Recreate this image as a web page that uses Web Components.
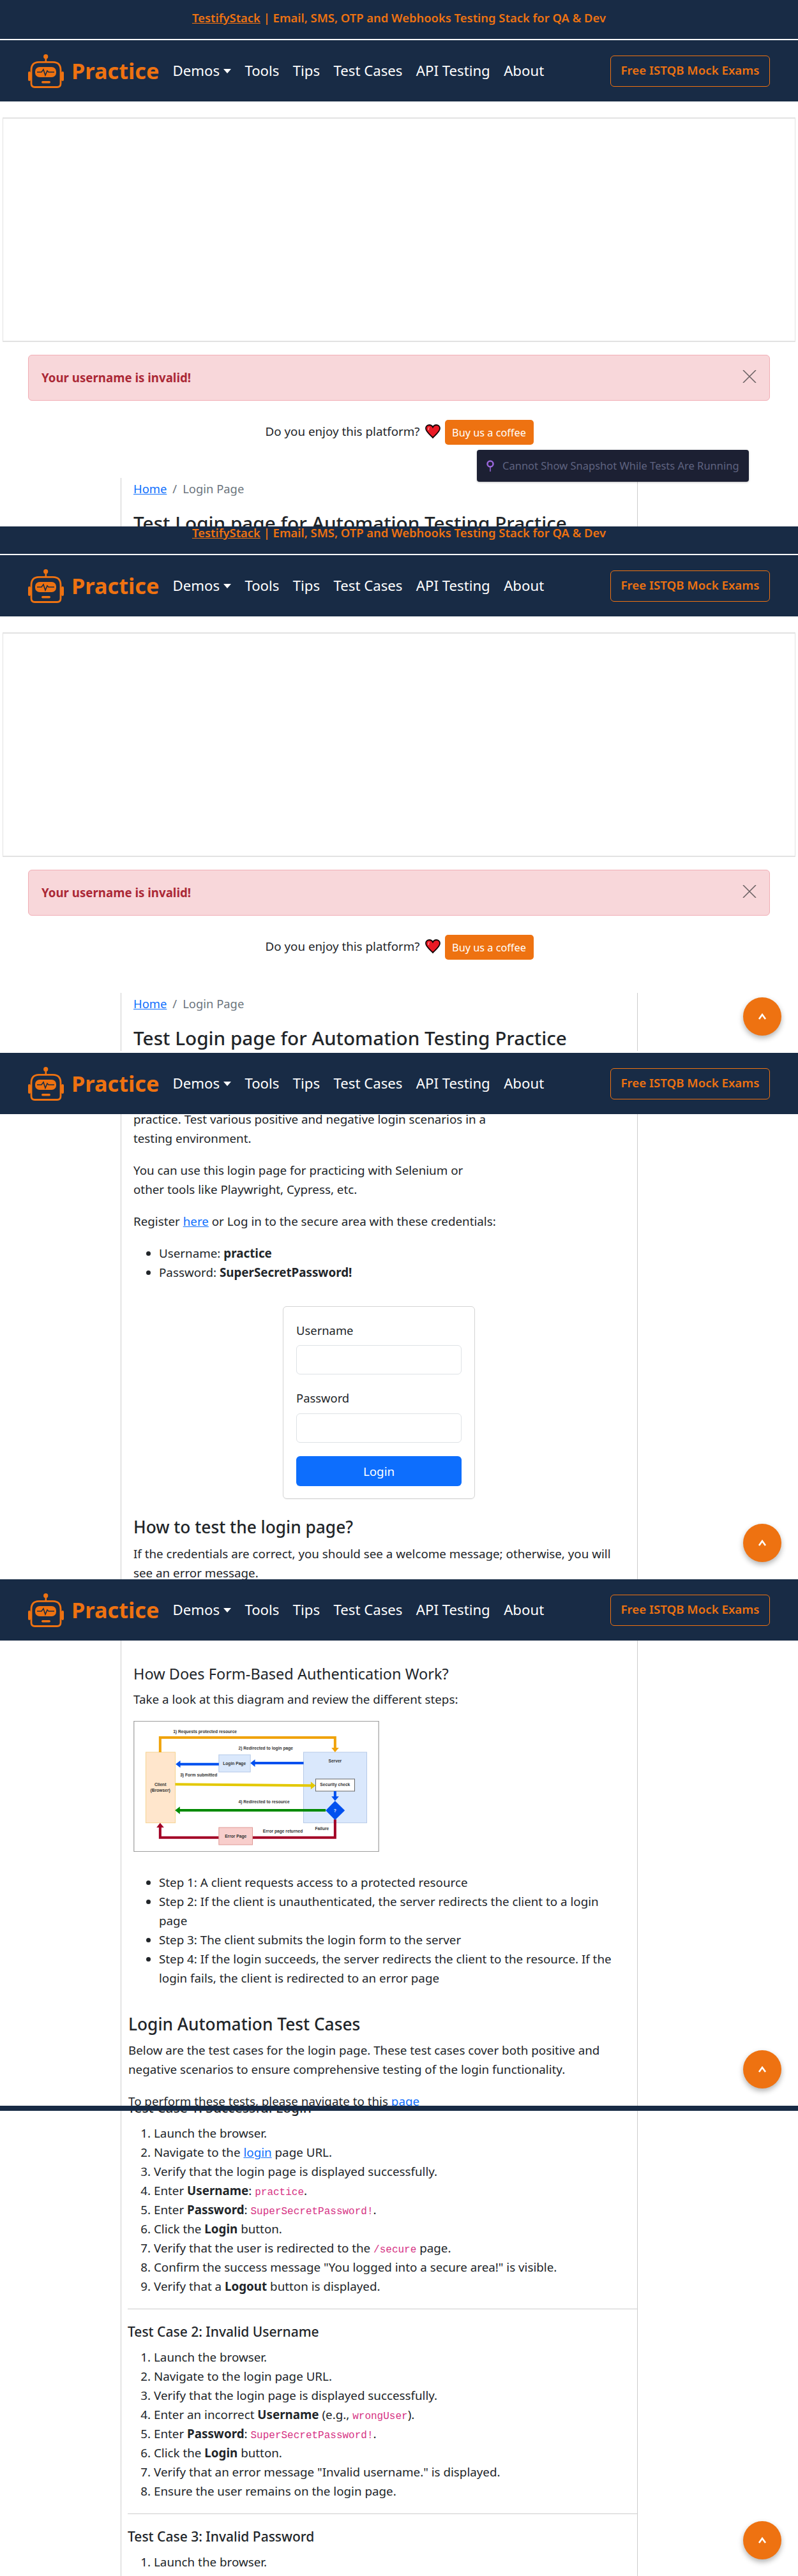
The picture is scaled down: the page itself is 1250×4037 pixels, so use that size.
<!DOCTYPE html>
<html>
<head>
<meta charset="utf-8">
<title>Test Login page for Automation Testing Practice</title>
<style>
  body { margin: 0; background: #fff; color: #212529; font: 18.8px/30px "Noto Sans", sans-serif; }
</style>
</head>
<body>

<page-slice style="--h:825px">
  <promo-banner></promo-banner>
  <practice-nav></practice-nav>
  <ad-frame></ad-frame>
  <alert-box>Your username is invalid!</alert-box>
  <coffee-row></coffee-row>
  <content-col><login-heading></login-heading></content-col>
  <snapshot-tip>Cannot Show Snapshot While Tests Are Running</snapshot-tip>
</page-slice>

<page-slice style="--h:825px">
  <promo-banner compact></promo-banner>
  <practice-nav></practice-nav>
  <ad-frame></ad-frame>
  <alert-box>Your username is invalid!</alert-box>
  <coffee-row></coffee-row>
  <content-col><login-heading></login-heading></content-col>
  <scroll-top style="top:738px"></scroll-top>
</page-slice>

<page-slice style="--h:825px">
  <practice-nav></practice-nav>
  <content-col style="margin-top:-7px">
    <login-intro></login-intro>
    <login-card></login-card>
    <how-to-test></how-to-test>
  </content-col>
  <scroll-top style="top:738px"></scroll-top>
</page-slice>

<page-slice style="--h:825px">
  <practice-nav></practice-nav>
  <content-col>
    <auth-steps></auth-steps>
    <cases-intro></cases-intro>
  </content-col>
  <scroll-top style="top:738px"></scroll-top>
</page-slice>

<page-slice style="--h:737px">
  <nav-strip></nav-strip>
  <content-col>
    <test-case first name="Test Case 1: Successful Login" steps='["Launch the browser.","Navigate to the <a href=\"#\">login</a> page URL.","Verify that the login page is displayed successfully.","Enter <b>Username</b>: <code>practice</code>.","Enter <b>Password</b>: <code>SuperSecretPassword!</code>.","Click the <b>Login</b> button.","Verify that the user is redirected to the <code>/secure</code> page.","Confirm the success message \"You logged into a secure area!\" is visible.","Verify that a <b>Logout</b> button is displayed."]'></test-case>
    <test-case name="Test Case 2: Invalid Username" steps='["Launch the browser.","Navigate to the login page URL.","Verify that the login page is displayed successfully.","Enter an incorrect <b>Username</b> (e.g., <code>wrongUser</code>).","Enter <b>Password</b>: <code>SuperSecretPassword!</code>.","Click the <b>Login</b> button.","Verify that an error message \"Invalid username.\" is displayed.","Ensure the user remains on the login page."]'></test-case>
    <test-case name="Test Case 3: Invalid Password" steps='["Launch the browser."]'></test-case>
  </content-col>
  <scroll-top style="top:651px"></scroll-top>
</page-slice>

<script>
const NAVY = '#182b45';
const ORANGE = '#ee7211';

const textCss = `
  * { box-sizing: border-box; }
  p, ul, ol, h1, h2, h3 { margin: 0; padding: 0; }
  p, li { font-size: 18.8px; line-height: 30px; }
  a { color: #0d6efd; text-decoration: underline; text-underline-offset: 1px; }
  b { font-weight: 700; }
  code { font: 16px/1 "Liberation Mono", monospace; color: #d63384; }
  h1, h2, h3 { font-weight: 500; color: #212529; }
`;

class PageSlice extends HTMLElement {
  constructor() {
    super();
    this.attachShadow({mode: 'open'}).innerHTML = `
      <style>
        :host { display: block; position: relative; height: var(--h); overflow: hidden; }
      </style>
      <slot></slot>`;
  }
}

class PromoBanner extends HTMLElement {
  constructor() {
    super();
    this.attachShadow({mode: 'open'}).innerHTML = `
      <style>
        :host { display: block; height: 63px; background: ${NAVY}; border-bottom: 2px solid #fff; overflow: hidden; box-sizing: border-box; }
        :host([compact]) { height: 45px; }
        .text { height: 61px; padding-top: 13px; text-align: center; color: ${ORANGE}; font-size: 18.4px; font-weight: 600; line-height: 30px; }
        :host([compact]) .text { margin-top: -18px; }
        a { color: inherit; }
      </style>
      <div class="text"><a href="#">TestifyStack</a> | Email, SMS, OTP and Webhooks Testing Stack for QA &amp; Dev</div>`;
  }
}

class PracticeNav extends HTMLElement {
  constructor() {
    super();
    this.attachShadow({mode: 'open'}).innerHTML = `
      <style>
        :host { display: flex; position: relative; z-index: 2; align-items: center; height: 96px; padding: 0 44px; background: ${NAVY}; box-sizing: border-box; }
        svg { width: 56px; height: 54px; flex: none; margin-right: 12px; margin-top: 2px; }
        .brand { color: ${ORANGE}; font-size: 34.3px; font-weight: 700; line-height: 40px; margin-right: 21px; }
        .links { display: flex; gap: 21.4px; align-items: center; flex: 1; color: #fff; font-size: 22.2px; line-height: 30px; }
        .demos { display: flex; align-items: center; gap: 6px; }
        .demos::after { content: ""; border: 6.5px solid transparent; border-top: 7px solid #fff; border-bottom: 0; }
        .exam { width: 248px; height: 47px; border: 1px solid ${ORANGE}; border-radius: 6px; color: ${ORANGE}; font-size: 18.7px; font-weight: 600; line-height: 44px; text-align: center; }
      </style>
      <svg viewBox="0 0 56 54" fill="${ORANGE}">
        <circle cx="27.7" cy="3.7" r="3.6"/>
        <rect x="26.5" y="5" width="2.6" height="7"/>
        <path d="M17 12.4H39Q51 12.4 51 25V46Q51 51.5 45.5 51.5H10.5Q5 51.5 5 46V25Q5 12.4 17 12.4Z" fill="none" stroke="${ORANGE}" stroke-width="2.8"/>
        <rect x="0" y="27" width="4" height="15" rx="2"/>
        <rect x="52" y="27" width="4" height="15" rx="2"/>
        <rect x="11" y="20" width="33" height="16" rx="7"/>
        <polyline points="14,28 21,28 24,24 27,33 30,26 32,28 41,28" fill="none" stroke="${NAVY}" stroke-width="1.6"/>
        <rect x="21" y="42" width="14" height="3.5" rx="1.7"/>
      </svg>
      <div class="brand">Practice</div>
      <div class="links">
        <span class="demos">Demos</span>
        <span>Tools</span>
        <span>Tips</span>
        <span>Test Cases</span>
        <span>API Testing</span>
        <span>About</span>
      </div>
      <div class="exam">Free ISTQB Mock Exams</div>`;
  }
}

class NavStrip extends HTMLElement {
  constructor() {
    super();
    this.attachShadow({mode: 'open'}).innerHTML = `
      <style>:host { display: block; position: relative; z-index: 2; height: 8px; background: ${NAVY}; }</style>`;
  }
}

class AdFrame extends HTMLElement {
  constructor() {
    super();
    this.attachShadow({mode: 'open'}).innerHTML = `
      <style>
        :host { display: block; height: 352px; margin: 25px 4px 0; border: 1px solid #e2e2e2; border-width: 2px 1px; box-sizing: border-box; }
      </style>`;
  }
}

class AlertBox extends HTMLElement {
  constructor() {
    super();
    this.attachShadow({mode: 'open'}).innerHTML = `
      <style>
        :host { display: flex; align-items: center; justify-content: space-between; height: 72px; margin: 20px 44px 0; padding: 0 20px; background: #f8d7da; border: 1px solid #f1aeb5; border-radius: 6px; color: #ab2836; font-size: 18.7px; font-weight: 700; box-sizing: border-box; }
        svg { width: 22px; height: 20px; margin-top: -5px; }
      </style>
      <span><slot></slot></span>
      <svg viewBox="0 0 22 20" fill="none" stroke="#6e6466" stroke-width="1.6"><path d="M1 0 21 20M21 0 1 20"/></svg>`;
  }
}

class CoffeeRow extends HTMLElement {
  constructor() {
    super();
    this.attachShadow({mode: 'open'}).innerHTML = `
      <style>
        :host { display: flex; align-items: center; justify-content: center; gap: 8px; height: 39px; margin: 30px 0 52px; padding-left: 1px; }
        span { margin-top: -3px; }
        svg { width: 24px; height: 22px; margin-top: -3px; }
        .buy { height: 39px; width: 139px; margin: 0 0 0 -1px; background: ${ORANGE}; border-radius: 5px; color: #fff; font-size: 16.3px; line-height: 40px; text-align: center; }
      </style>
      <span>Do you enjoy this platform?</span>
      <svg viewBox="0 0 24 22">
        <path d="M12 21C7 16 1 11 1 6.5 1 3 3.5 1 6.5 1 9 1 11 2.5 12 4.5 13 2.5 15 1 17.5 1 20.5 1 23 3 23 6.5 23 11 17 16 12 21Z" fill="#ea1a25" stroke="#120405" stroke-width="1.8"/>
        <path d="M6.5 4.5Q4.5 6 5.5 9" fill="none" stroke="#ff9ca0" stroke-width="1.2"/>
      </svg>
      <div class="buy">Buy us a coffee</div>`;
  }
}

class SnapshotTip extends HTMLElement {
  constructor() {
    super();
    this.attachShadow({mode: 'open'}).innerHTML = `
      <style>
        :host { display: flex; align-items: center; position: absolute; z-index: 3; top: 705px; left: 747px; width: 426px; height: 50px; padding-left: 14px; background: #1c2033; border-radius: 4px; color: #5f6380; font-size: 16.5px; box-shadow: 0 1px 3px rgba(0,0,0,.25); box-sizing: border-box; }
        svg { width: 14px; height: 18px; margin-right: 12px; flex: none; }
      </style>
      <svg viewBox="0 0 14 18" fill="none" stroke="#9a67dc" stroke-width="2.5"><circle cx="7" cy="6" r="4.5"/><path d="M7 11V18" stroke-width="1.5"/></svg>
      <span><slot></slot></span>`;
  }
}

class ScrollTop extends HTMLElement {
  constructor() {
    super();
    this.attachShadow({mode: 'open'}).innerHTML = `
      <style>
        :host { display: flex; align-items: center; justify-content: center; position: absolute; z-index: 1; left: 1164px; width: 60px; height: 60px; background: ${ORANGE}; border-radius: 50%; box-shadow: 0 4px 8px rgba(0,0,0,.3); }
        svg { width: 14px; height: 10px; }
      </style>
      <svg viewBox="0 0 14 10" fill="none" stroke="#fff" stroke-width="2.6"><path d="M2 9 7 2 12 9"/></svg>`;
  }
}

class ContentCol extends HTMLElement {
  constructor() {
    super();
    this.attachShadow({mode: 'open'}).innerHTML = `
      <style>
        :host { display: block; width: 810px; margin-left: 189px; padding: 0 23px 0 19px; border: solid #ccc; border-width: 0 1px; box-sizing: border-box; }
      </style>
      <slot></slot>`;
  }
}

class LoginHeading extends HTMLElement {
  constructor() {
    super();
    this.attachShadow({mode: 'open'}).innerHTML = `
      <style>
        ${textCss}
        :host { display: block; padding-top: 2px; }
        .crumb { display: flex; gap: 9px; color: #6c757d; font-size: 18.4px; line-height: 30px; }
        h1 { margin-top: 19px; font-size: 29.7px; line-height: 40px; white-space: nowrap; }
      </style>
      <div class="crumb"><a href="#">Home</a><span>/</span><span>Login Page</span></div>
      <h1>Test Login page for Automation Testing Practice</h1>`;
  }
}

class LoginIntro extends HTMLElement {
  constructor() {
    super();
    this.attachShadow({mode: 'open'}).innerHTML = `
      <style>
        ${textCss}
        :host { display: block; max-width: 600px; }
        p { margin-bottom: 20px; }
        ul { padding-left: 40px; }
      </style>
      <p>practice. Test various positive and negative login scenarios in a<br>testing environment.</p>
      <p>You can use this login page for practicing with Selenium or<br>other tools like Playwright, Cypress, etc.</p>
      <p>Register <a href="#">here</a> or Log in to the secure area with these credentials:</p>
      <ul>
        <li>Username: <b>practice</b></li>
        <li>Password: <b>SuperSecretPassword!</b></li>
      </ul>`;
  }
}

class LoginCard extends HTMLElement {
  constructor() {
    super();
    this.attachShadow({mode: 'open'}).innerHTML = `
      <style>
        * { box-sizing: border-box; }
        :host { display: block; width: 301px; height: 302px; margin: 38px 0 0 234px; padding: 22px 20px 20px; border: 1px solid #d4d4d4; border-radius: 6px; box-shadow: 0 1px 1px rgba(0,0,0,.06); box-sizing: border-box; }
        label { display: block; font-size: 18.4px; line-height: 30px; }
        .field { height: 46px; margin: 8px 0 22px; border: 1px solid #dee2e6; border-radius: 6px; background: #fff; }
        .field.last { margin: 9px 0 21px; }
        button { display: block; width: 100%; height: 47px; border: 0; border-radius: 6px; background: #0d6efd; color: #fff; font: 18.8px "Noto Sans", sans-serif; }
      </style>
      <label>Username</label>
      <div class="field"></div>
      <label>Password</label>
      <div class="field last"></div>
      <button>Login</button>`;
  }
}

class HowToTest extends HTMLElement {
  constructor() {
    super();
    this.attachShadow({mode: 'open'}).innerHTML = `
      <style>
        ${textCss}
        :host { display: block; }
        h2 { margin: 26px 0 9px; font-size: 26.3px; line-height: 36px; }
      </style>
      <h2>How to test the login page?</h2>
      <p>If the credentials are correct, you should see a welcome message; otherwise, you will see an error message.</p>`;
  }
}

class AuthDiagram extends HTMLElement {
  constructor() {
    super();
    this.attachShadow({mode: 'open'}).innerHTML = `
      <style>
        :host { display: block; width: 385px; height: 205px; }
        svg { display: block; width: 100%; height: 100%; }
        text { font: 700 20px "Liberation Sans", sans-serif; fill: #333; }
        .m { text-anchor: middle; }
      </style>
      <svg viewBox="58 52 1152 615">
        <rect x="59" y="53" width="1150" height="613" fill="#fff" stroke="#8a8a8a" stroke-width="3"/>
        <rect x="115" y="199" width="138" height="332" fill="#ffe6cc" stroke="#f5d28f" stroke-width="3"/>
        <rect x="856" y="199" width="297" height="332" fill="#dae8fc" stroke="#b5c9e8" stroke-width="3"/>
        <path d="M182 199V130H1004V182" fill="none" stroke="#f0a30a" stroke-width="12"/>
        <path d="M987 178H1022L1004 199Z" fill="#f0a30a"/>
        <rect x="458" y="211" width="148" height="81" fill="#dae8fc" stroke="#b5c9e8" stroke-width="3"/>
        <path d="M856 250H620" stroke="#0050ef" stroke-width="12"/>
        <path d="M606 250 628 233V268Z" fill="#0050ef"/>
        <path d="M458 255H270" stroke="#0050ef" stroke-width="12"/>
        <path d="M255 255 277 238V272Z" fill="#0050ef"/>
        <path d="M253 350 895 356" stroke="#e3c800" stroke-width="12"/>
        <path d="M913 356 890 338V374Z" fill="#e3c800"/>
        <rect x="913" y="325" width="183" height="57" fill="#fff" stroke="#666" stroke-width="3"/>
        <path d="M1004 382V412" stroke="#0050ef" stroke-width="12"/>
        <path d="M987 407H1022L1004 428Z" fill="#0050ef"/>
        <path d="M960 472H270" stroke="#008a00" stroke-width="12"/>
        <path d="M252 472 275 455V490Z" fill="#008a00"/>
        <path d="M1004 515V600H182V550" fill="none" stroke="#a20025" stroke-width="12"/>
        <path d="M182 531 165 553H200Z" fill="#a20025"/>
        <path d="M1004 428 1050 473 1004 518 960 473Z" fill="#0050ef"/>
        <rect x="458" y="553" width="158" height="81" fill="#f8cecc" stroke="#e09a96" stroke-width="3"/>
        <text x="243" y="108">1) Requests protected resource</text>
        <text x="550" y="188">2) Redirected to login page</text>
        <text class="m" x="531" y="258">Login Page</text>
        <text class="m" x="1004" y="247">Server</text>
        <text x="276" y="314">3) Form submitted</text>
        <text class="m" x="183" y="358">Client</text>
        <text class="m" x="183" y="386">(Browser)</text>
        <text class="m" x="1004" y="359">Security check</text>
        <text x="550" y="438">4) Redirected to resource</text>
        <text class="m" x="1004" y="481" style="fill:#fff">?</text>
        <text x="910" y="566">Failure</text>
        <text x="665" y="576">Error page returned</text>
        <text class="m" x="537" y="600">Error Page</text>
      </svg>`;
  }
}

class AuthSteps extends HTMLElement {
  constructor() {
    super();
    this.attachShadow({mode: 'open'}).innerHTML = `
      <style>
        ${textCss}
        :host { display: block; padding-top: 36px; }
        h3 { font-size: 23.5px; font-weight: 400; line-height: 32px; }
        p { margin: 9px 0 19px; }
        ul { margin-top: 33px; padding-left: 40px; }
      </style>
      <h3>How Does Form-Based Authentication Work?</h3>
      <p>Take a look at this diagram and review the different steps:</p>
      <auth-diagram></auth-diagram>
      <ul>
        <li>Step 1: A client requests access to a protected resource</li>
        <li>Step 2: If the client is unauthenticated, the server redirects the client to a login page</li>
        <li>Step 3: The client submits the login form to the server</li>
        <li>Step 4: If the login succeeds, the server redirects the client to the resource. If the login fails, the client is redirected to an error page</li>
      </ul>`;
  }
}

class CasesIntro extends HTMLElement {
  constructor() {
    super();
    this.attachShadow({mode: 'open'}).innerHTML = `
      <style>
        ${textCss}
        :host { display: block; margin-left: -8px; }
        h2 { margin: 39px 0 8px; font-size: 26.3px; line-height: 36px; }
        p { margin-bottom: 20px; }
      </style>
      <h2>Login Automation Test Cases</h2>
      <p>Below are the test cases for the login page. These test cases cover both positive and negative scenarios to ensure comprehensive testing of the login functionality.</p>
      <p>To perform these tests, please navigate to this <a href="#">page</a></p>`;
  }
}

class TestCase extends HTMLElement {
  constructor() {
    super();
    this.attachShadow({mode: 'open'});
  }
  connectedCallback() {
    const steps = JSON.parse(this.getAttribute('steps'));
    this.shadowRoot.innerHTML = `
      <style>
        ${textCss}
        :host { display: block; margin: 0 -23px 0 -9px; }
        :host([first]) h3 { margin-top: -21px; }
        h3 { margin-bottom: 9px; font-size: 21px; line-height: 32px; }
        ol { padding-left: 41px; }
        hr { height: 1px; margin: 20px 0 19px; border: 0; background: #ccc; }
      </style>
      <h3>${this.getAttribute('name')}</h3>
      <ol>${steps.map(s => `<li>${s}</li>`).join('')}</ol>
      <hr>`;
  }
}

customElements.define('page-slice', PageSlice);
customElements.define('promo-banner', PromoBanner);
customElements.define('practice-nav', PracticeNav);
customElements.define('nav-strip', NavStrip);
customElements.define('ad-frame', AdFrame);
customElements.define('alert-box', AlertBox);
customElements.define('coffee-row', CoffeeRow);
customElements.define('snapshot-tip', SnapshotTip);
customElements.define('scroll-top', ScrollTop);
customElements.define('content-col', ContentCol);
customElements.define('login-heading', LoginHeading);
customElements.define('login-intro', LoginIntro);
customElements.define('login-card', LoginCard);
customElements.define('how-to-test', HowToTest);
customElements.define('auth-diagram', AuthDiagram);
customElements.define('auth-steps', AuthSteps);
customElements.define('cases-intro', CasesIntro);
customElements.define('test-case', TestCase);
</script>
</body>
</html>
